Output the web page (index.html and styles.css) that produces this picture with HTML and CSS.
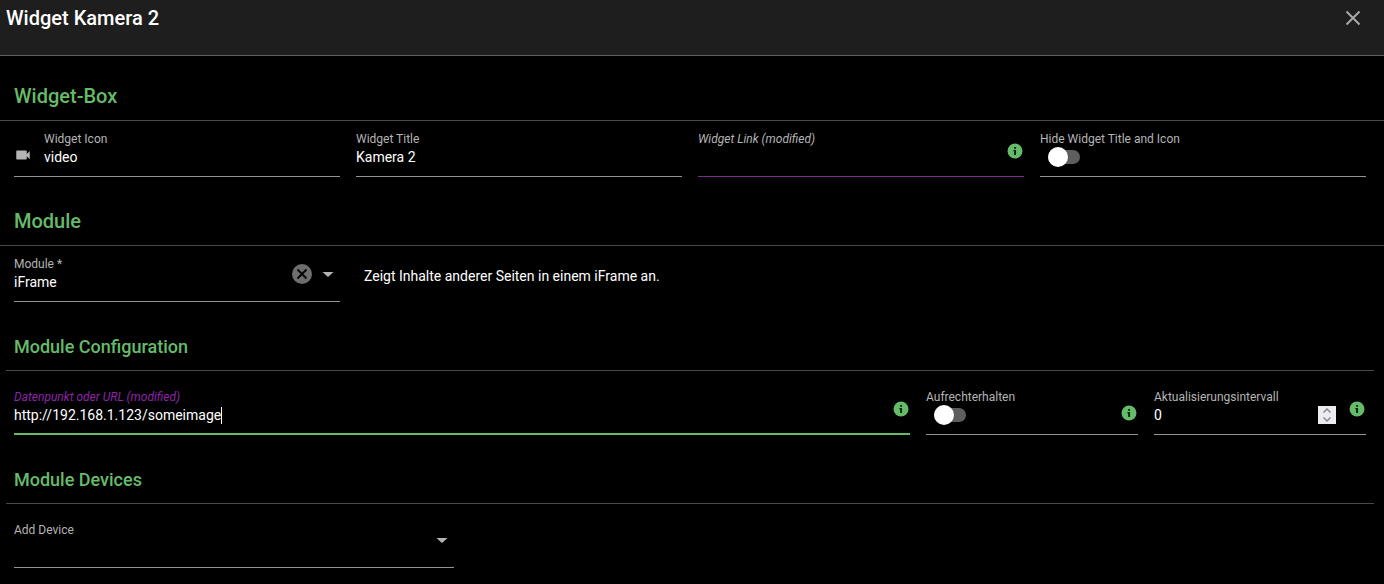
FILE: index.html
```html
<!DOCTYPE html>
<html lang="de">
<head>
<meta charset="utf-8">
<meta name="viewport" content="width=device-width, initial-scale=1">
<title>Widget Kamera 2</title>
<link rel="stylesheet" href="styles.css">
</head>
<body>
<svg class="sprite" aria-hidden="true">
  <symbol id="info" viewBox="0 0 24 24"><circle cx="12" cy="12" r="10" fill="currentColor"/><path d="M10.800 6.700h2.600v2.300h-2.600zM9.800 10.700h3.600v6.600h-2.600v-5h-1z" fill="#06240a"/></symbol>
  <symbol id="arrow" viewBox="0 0 24 24"><path d="M6.500 10l5.500 5 5.500-5z" fill="currentColor"/></symbol>
</svg>
<header class="titlebar">
  <h1 class="titlebar-text">Widget Kamera 2</h1>
  <button class="icon-button" type="button" aria-label="Close">
    <svg class="icon-large" viewBox="0 0 24 24"><path d="M5.500 5.500l13 13M18.500 5.500l-13 13" stroke="currentColor" stroke-width="2" fill="none"/></svg>
  </button>
</header>
<main>
  <section class="section section-first">
    <h2 class="heading">Widget-Box</h2>
    <div class="fields">
      <div class="field span-3">
        <svg class="icon low" viewBox="0 0 24 24"><path d="M17 10.500V7a1 1 0 0 0-1-1H4a1 1 0 0 0-1 1v10a1 1 0 0 0 1 1h12a1 1 0 0 0 1-1v-3.500l4 4v-11z" fill="currentColor"/></svg>
        <div class="body">
          <label class="label" for="icon">Widget Icon</label>
          <input class="value" id="icon" type="text" value="video">
        </div>
      </div>
      <div class="field span-3">
        <div class="body">
          <label class="label" for="title">Widget Title</label>
          <input class="value" id="title" type="text" value="Kamera 2">
        </div>
      </div>
      <div class="field field-modified span-3">
        <div class="body">
          <label class="label label-modified" for="link">Widget Link (modified)</label>
          <input class="value" id="link" type="text">
        </div>
        <svg class="icon info"><use href="#info"/></svg>
      </div>
      <div class="field span-3">
        <div class="body">
          <label class="label" for="hide">Hide Widget Title and Icon</label>
          <input class="switch" id="hide" type="checkbox">
        </div>
      </div>
    </div>
  </section>

  <section class="section">
    <h2 class="heading">Module</h2>
    <div class="fields">
      <div class="field span-3">
        <div class="body">
          <label class="label" for="module">Module *</label>
          <select class="value" id="module"><option>iFrame</option></select>
        </div>
        <div class="actions">
          <button class="icon-button" type="button" aria-label="Clear">
            <svg class="icon-large" viewBox="0 0 24 24"><circle cx="12" cy="12" r="10" fill="#6e6e6e"/><path d="M7.500 7.500l9 9M16.500 7.500l-9 9" stroke="#000" stroke-width="1.800" fill="none"/></svg>
          </button>
          <svg class="icon-large"><use href="#arrow"/></svg>
        </div>
      </div>
      <p class="description">Zeigt Inhalte anderer Seiten in einem iFrame an.</p>
    </div>
  </section>

  <section class="section section-inner">
    <h2 class="heading">Module Configuration</h2>
    <div class="fields">
      <div class="field field-focused span-8">
        <div class="body">
          <label class="label label-modified" for="url">Datenpunkt oder URL (modified)</label>
          <div class="value-row">
            <input class="value value-fit" id="url" type="text" value="http://192.168.1.123/someimage">
            <span class="caret"></span>
          </div>
        </div>
        <svg class="icon info"><use href="#info"/></svg>
      </div>
      <div class="field span-2">
        <div class="body">
          <label class="label" for="keep">Aufrechterhalten</label>
          <input class="switch" id="keep" type="checkbox">
        </div>
        <svg class="icon info low"><use href="#info"/></svg>
      </div>
      <div class="field span-2">
        <div class="body">
          <label class="label" for="interval">Aktualisierungsintervall</label>
          <div class="value-row">
            <input class="value value-number" id="interval" type="number" value="0">
            <div class="stepper">
              <button class="step" type="button" aria-label="Increase"><svg class="step-icon" viewBox="0 0 10 5"><path d="M1.500 4.500L5 1l3.500 3.500" stroke="#8a8a90" stroke-width="1.500" fill="none"/></svg></button>
              <button class="step" type="button" aria-label="Decrease"><svg class="step-icon" viewBox="0 0 10 5"><path d="M1.500 .5L5 4 8.500 .5" stroke="#8a8a90" stroke-width="1.500" fill="none"/></svg></button>
            </div>
          </div>
        </div>
        <svg class="icon info"><use href="#info"/></svg>
      </div>
    </div>
  </section>

  <section class="section section-inner">
    <h2 class="heading">Module Devices</h2>
    <div class="fields">
      <div class="field span-4">
        <div class="body">
          <label class="label" for="device">Add Device</label>
          <select class="value" id="device"><option></option></select>
        </div>
        <div class="actions"><svg class="icon-large"><use href="#arrow"/></svg></div>
      </div>
    </div>
  </section>
</main>
</body>
</html>
```

FILE: styles.css
```css
* {
  box-sizing: border-box;
}

body {
  margin: 0;
  background: #000;
  color: #fff;
  font-family: Roboto, "Liberation Sans", sans-serif;
  font-size: 14px;
  line-height: 20px;
}

input,
select,
button {
  margin: 0;
  padding: 0;
  border: 0;
  outline: 0;
  background: none;
  color: inherit;
  font: inherit;
}

.sprite {
  display: none;
}

.titlebar {
  display: flex;
  align-items: flex-start;
  justify-content: space-between;
  min-height: 56px;
  padding: 6px 19px 6px 6px;
  border-bottom: 1px solid #5e5e5e;
  background: #1e1e1e;
}

.titlebar-text {
  margin: 0;
  font-size: 20px;
  font-weight: 500;
  line-height: 24px;
}

.icon-button {
  display: flex;
  color: #a8a8a8;
}

.icon-large {
  width: 24px;
  height: 24px;
}

.section {
  padding-top: 32px;
}

.section-first {
  padding-top: 28px;
}

.heading {
  margin: 0;
  padding: 0 14px 12px;
  border-bottom: 1px solid #494949;
  color: #66bb6a;
  font-size: 20px;
  font-weight: 500;
  line-height: 24px;
}

.fields {
  display: grid;
  grid-template-columns: repeat(12, minmax(0, 1fr));
  column-gap: 16px;
  padding: 0 18px 0 14px;
}

.section-inner {
  padding: 33px 10px 0 6px;
}

.section-inner .heading {
  padding: 0 8px 11px;
  font-size: 18px;
}

.section-inner .fields {
  padding: 8px 8px 0;
}

.span-2 { grid-column: span 2; }
.span-3 { grid-column: span 3; }
.span-4 { grid-column: span 4; }
.span-8 { grid-column: span 8; }

.field {
  display: flex;
  align-items: flex-start;
  gap: 12px;
  padding: 10px 0 9px;
  border-bottom: 1px solid #949494;
  color: #b4b4b4;
}

.field-modified {
  border-color: #7b2f8b;
}

.field-focused {
  padding-bottom: 8px;
  border-bottom: 2px solid #66bb6a;
}

.body {
  display: flex;
  flex: 1;
  flex-direction: column;
  align-items: stretch;
  min-width: 0;
}

.label {
  color: #b4b4b4;
  font-size: 12px;
  line-height: 16px;
}

.label-modified {
  font-style: italic;
}

.field-focused .label {
  color: #8e24aa;
}

.value {
  width: 100%;
  height: 20px;
  color: #fff;
  appearance: none;
}

.value-row {
  display: flex;
  align-items: center;
}

.value-fit {
  width: auto;
  field-sizing: content;
}

.value-number {
  flex: 1;
  min-width: 0;
  appearance: textfield;
}

.caret {
  width: 1px;
  height: 17px;
  background: #fff;
}

.icon {
  flex: none;
  width: 18px;
  height: 18px;
  margin-top: 11px;
}

.info {
  color: #66bb6a;
}

.low {
  margin-top: 15px;
}

.actions {
  display: flex;
  gap: 2px;
  padding-top: 6px;
}

.switch {
  display: grid;
  align-items: center;
  width: 32px;
  height: 20px;
  margin-left: 8px;
  appearance: none;
}

.switch::before,
.switch::after {
  grid-area: 1 / 1;
  content: "";
}

.switch::before {
  height: 14px;
  border-radius: 7px;
  background: #5e5e5e;
}

.switch::after {
  width: 20px;
  height: 20px;
  border-radius: 50%;
  background: #fff;
}

.stepper {
  display: flex;
  flex-direction: column;
  width: 18px;
  height: 18px;
  background: #ebebf0;
}

.step {
  display: flex;
  flex: 1;
  align-items: center;
  justify-content: center;
}

.step-icon {
  width: 10px;
  height: 5px;
}

.description {
  grid-column: span 9;
  margin: 0;
  padding: 20px 8px 0;
}
```
